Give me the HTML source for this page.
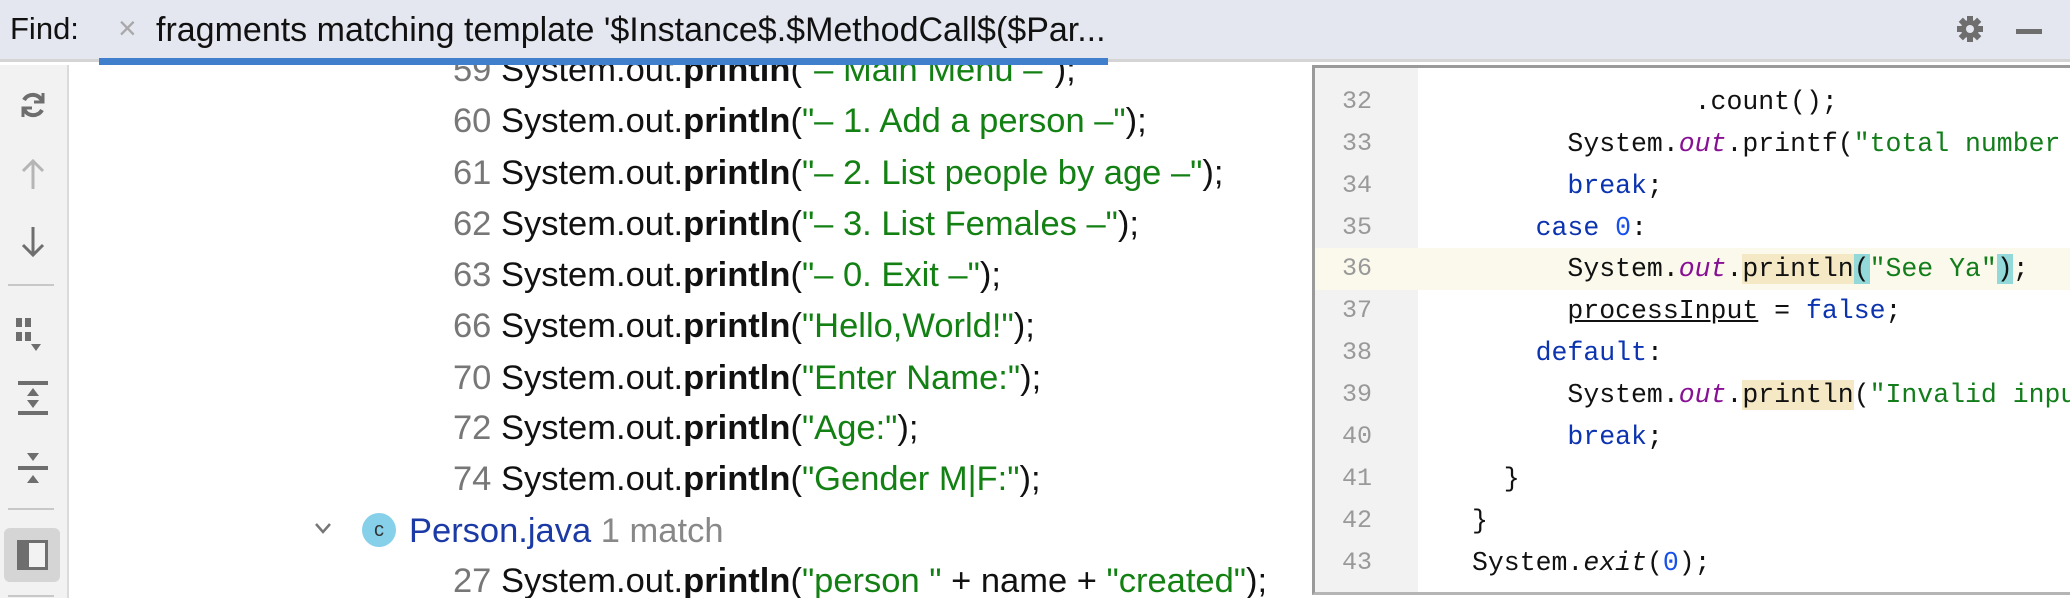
<!DOCTYPE html>
<html><head><meta charset="utf-8"><style>
*{margin:0;padding:0;box-sizing:border-box}
body{width:2070px;height:598px;overflow:hidden;background:#fff;position:relative;font-family:"Liberation Sans",sans-serif}
.hdr{position:absolute;left:0;top:0;width:2070px;height:62px;background:#e4e7ef;border-bottom:3px solid #d4d4d4}
.find{position:absolute;left:10px;top:11px;font-size:31px;color:#111}
.tabx{position:absolute;left:118px;top:10px;font-size:32px;color:#a8a8a8}
.tabt{position:absolute;left:156px;top:11px;font-size:34px;color:#111;white-space:nowrap}
.blue{position:absolute;left:99px;top:58px;width:1009px;height:7px;background:#3f7fcc}
.tb{position:absolute;left:0;top:65px;width:69px;height:533px;background:#f2f2f2;border-right:2px solid #dadada}
.tree{position:absolute;left:69px;top:65px;width:1243px;height:533px;overflow:hidden}
.row{position:absolute;font-size:34.5px;white-space:nowrap;color:#111;line-height:40px}
.row .n{color:#777}
.row b{font-weight:bold}
.row .s{color:#138013}
.ed{position:absolute;left:1312px;top:65px;width:758px;height:530px;border:3px solid #9a9a9a;border-right:none;border-bottom:3px solid #b5b5b5;background:#fff;overflow:hidden}
.gut{position:absolute;left:0;top:0;width:103px;height:100%;background:#f2f2f2}
.cl{position:absolute;left:0;width:758px;height:42px;font-family:"Liberation Mono",monospace;font-size:26.5px;white-space:pre;line-height:42px}
.cl .ln{position:absolute;left:27px;color:#999;font-size:25px}
.cl .c{position:absolute;left:157px;color:#111}
.k{color:#0c33b0}.o{color:#871094;font-style:italic}.st{color:#127d1a}.num{color:#1750eb}
.hl{background:#f5e9c5}.br{background:#93d9d9}
</style></head><body>
<div class="hdr">
<div class="find">Find:</div>
<div class="tabx">×</div>
<div class="tabt">fragments matching template '$Instance$.$MethodCall$($Par...</div>
<svg style="position:absolute;left:1955px;top:14px" width="30" height="30" viewBox="0 0 30 30"><g fill="#6e6e6e"><circle cx="15" cy="15" r="9"/><rect x="12" y="2" width="6" height="26"/><rect x="2" y="12" width="26" height="6"/><rect x="12" y="2" width="6" height="26" transform="rotate(45 15 15)"/><rect x="12" y="2" width="6" height="26" transform="rotate(-45 15 15)"/></g><circle cx="15" cy="15" r="4" fill="#e4e7ef"/></svg>
<div style="position:absolute;left:2016px;top:29px;width:26px;height:5px;background:#6e6e6e"></div>
</div>
<div class="blue"></div>
<div class="tb">
<svg style="position:absolute;left:16px;top:23px" width="34" height="34" viewBox="0 0 34 34" fill="none" stroke="#6e6e6e" stroke-width="4"><path d="M26 13 A10 10 0 0 0 8 12"/><path d="M8 21 A10 10 0 0 0 26 22"/><path d="M27 5v9h-9" stroke-width="3"/><path d="M7 29v-9h9" stroke-width="3"/></svg>
<svg style="position:absolute;left:18px;top:92px" width="30" height="34" viewBox="0 0 30 34" fill="none" stroke="#b5b5b5" stroke-width="3"><path d="M15 4v28M5 14l10-10 10 10"/></svg>
<svg style="position:absolute;left:18px;top:160px" width="30" height="34" viewBox="0 0 30 34" fill="none" stroke="#6e6e6e" stroke-width="3"><path d="M15 2v28M5 20l10 10 10-10"/></svg>
<div style="position:absolute;left:8px;top:219px;width:46px;height:2px;background:#c8c8c8"></div>
<svg style="position:absolute;left:16px;top:253px" width="40" height="36" viewBox="0 0 40 36" fill="#6e6e6e"><rect x="0" y="0" width="6" height="9"/><rect x="9" y="0" width="6" height="9"/><rect x="0" y="14" width="6" height="9"/><rect x="9" y="14" width="6" height="9"/><path d="M15 26h10l-5 7z"/></svg>
<svg style="position:absolute;left:16px;top:313px" width="34" height="40" viewBox="0 0 34 40" fill="#6e6e6e"><rect x="2" y="3" width="30" height="4"/><path d="M11 18h12l-6-8z"/><path d="M11 22h12l-6 8z"/><rect x="2" y="33" width="30" height="4"/></svg>
<svg style="position:absolute;left:16px;top:385px" width="34" height="40" viewBox="0 0 34 40" fill="#6e6e6e"><path d="M11 3h12l-6 8z"/><rect x="2" y="16" width="30" height="4"/><path d="M11 33h12l-6-8z"/></svg>
<div style="position:absolute;left:8px;top:443px;width:46px;height:2px;background:#c8c8c8"></div>
<div style="position:absolute;left:4px;top:463px;width:56px;height:54px;background:#d5d5d5;border-radius:6px"></div>
<div style="position:absolute;left:17px;top:475px;width:31px;height:30px;border:3px solid #6e6e6e;border-left:12px solid #6e6e6e;background:#f2f2f2"></div>
<div style="position:absolute;left:8px;top:530px;width:46px;height:2px;background:#c8c8c8"></div>
</div>
<div class="tree">
<div class="row" style="left:384px;top:-15px"><span class="n">59</span> System.out.<b>println</b>(<span class="s">"– Main Menu –"</span>);</div>
<div class="row" style="left:384px;top:36px"><span class="n">60</span> System.out.<b>println</b>(<span class="s">"– 1. Add a person –"</span>);</div>
<div class="row" style="left:384px;top:88px"><span class="n">61</span> System.out.<b>println</b>(<span class="s">"– 2. List people by age –"</span>);</div>
<div class="row" style="left:384px;top:139px"><span class="n">62</span> System.out.<b>println</b>(<span class="s">"– 3. List Females –"</span>);</div>
<div class="row" style="left:384px;top:190px"><span class="n">63</span> System.out.<b>println</b>(<span class="s">"– 0. Exit –"</span>);</div>
<div class="row" style="left:384px;top:241px"><span class="n">66</span> System.out.<b>println</b>(<span class="s">"Hello,World!"</span>);</div>
<div class="row" style="left:384px;top:293px"><span class="n">70</span> System.out.<b>println</b>(<span class="s">"Enter Name:"</span>);</div>
<div class="row" style="left:384px;top:343px"><span class="n">72</span> System.out.<b>println</b>(<span class="s">"Age:"</span>);</div>
<div class="row" style="left:384px;top:394px"><span class="n">74</span> System.out.<b>println</b>(<span class="s">"Gender M|F:"</span>);</div>
<svg style="position:absolute;left:245px;top:456px" width="18" height="14" viewBox="0 0 18 14" fill="none" stroke="#777" stroke-width="2.5"><path d="M2 3l7 8 7-8"/></svg>
<div style="position:absolute;left:293px;top:448px;width:34px;height:34px;border-radius:50%;background:#87d0ea;color:#333;font-size:20px;text-align:center;line-height:34px">c</div>
<div class="row" style="left:340px;top:446px;color:#1b3aa6">Person.java <span style="color:#888">1 match</span></div>
<div class="row" style="left:384px;top:496px"><span class="n">27</span> System.out.<b>println</b>(<span class="s">"person "</span> + name + <span class="s">"created"</span>);</div>
</div>
<div class="ed">
<div class="gut"></div>
<div class="cl" style="top:13px"><span class="ln">32</span><span class="c">              .count();</span></div>
<div class="cl" style="top:55px"><span class="ln">33</span><span class="c">      System.<span class="o">out</span>.printf(<span class="st">"total number of females</span></span></div>
<div class="cl" style="top:97px"><span class="ln">34</span><span class="c">      <span class="k">break</span>;</span></div>
<div class="cl" style="top:139px"><span class="ln">35</span><span class="c">    <span class="k">case</span> <span class="num">0</span>:</span></div>
<div class="cl" style="top:180px;background:#fbf9ec"><span class="ln">36</span><span class="c">      System.<span class="o">out</span>.<span class="hl">println</span><span class="br">(</span><span class="st">"See Ya"</span><span class="br">)</span>;</span></div>
<div class="cl" style="top:222px"><span class="ln">37</span><span class="c">      <u>processInput</u> = <span class="k">false</span>;</span></div>
<div class="cl" style="top:264px"><span class="ln">38</span><span class="c">    <span class="k">default</span>:</span></div>
<div class="cl" style="top:306px"><span class="ln">39</span><span class="c">      System.<span class="o">out</span>.<span class="hl">println</span>(<span class="st">"Invalid input"</span>);</span></div>
<div class="cl" style="top:348px"><span class="ln">40</span><span class="c">      <span class="k">break</span>;</span></div>
<div class="cl" style="top:390px"><span class="ln">41</span><span class="c">  }</span></div>
<div class="cl" style="top:432px"><span class="ln">42</span><span class="c">}</span></div>
<div class="cl" style="top:474px"><span class="ln">43</span><span class="c">System.<i>exit</i>(<span class="num">0</span>);</span></div>
</div>
</body></html>
